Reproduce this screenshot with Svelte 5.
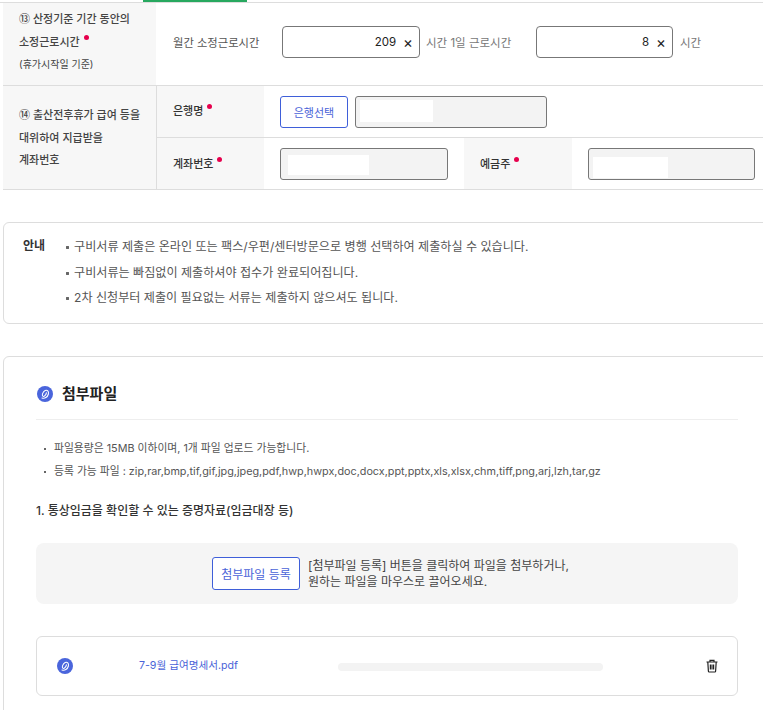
<script>
  const bullets = [
    '구비서류 제출은 온라인 또는 팩스/우편/센터방문으로 병행 선택하여 제출하실 수 있습니다.',
    '구비서류는 빠짐없이 제출하셔야 접수가 완료되어집니다.',
    '2차 신청부터 제출이 필요없는 서류는 제출하지 않으셔도 됩니다.'
  ];
  const fileNotes = [
    '파일용량은 15MB 이하이며, 1개 파일 업로드 가능합니다.',
    '등록 가능 파일 : zip,rar,bmp,tif,gif,jpg,jpeg,pdf,hwp,hwpx,doc,docx,ppt,pptx,xls,xlsx,chm,tiff,png,arj,lzh,tar,gz'
  ];
</script>

{#snippet clip(size)}
  <svg class="clip" width={size} height={size} viewBox="0 0 16 16">
    <circle cx="8" cy="8" r="8" fill="#4a65dc" />
    <path d="M5 12c2.6 1 5.6-.8 6.4-4C12 5.2 10.2 3.6 8.2 4.6 6 5.7 4.5 9 5.8 10.2c1.2 1 3.2-1.2 3.6-3.4" fill="none" stroke="#fff" stroke-width="1.1" stroke-linecap="round" />
  </svg>
{/snippet}

<div class="page">
  <div class="tabline"><div class="tabbar"></div></div>

  <div class="table">
    <div class="row first">
      <div class="th">
        <p>⑬ 산정기준 기간 동안의</p>
        <p>소정근로시간 <i class="req"></i></p>
        <p class="sub">(휴가시작일 기준)</p>
      </div>
      <div class="hours">
        <span class="plain">월간 소정근로시간</span>
        <div class="num wide"><span>209</span><b>×</b></div>
        <span class="unit">시간 1일 근로시간</span>
        <div class="num"><span>8</span><b>×</b></div>
        <span class="unit last">시간</span>
      </div>
    </div>

    <div class="row">
      <div class="th second">
        <p>⑭ 출산전후휴가 급여 등을</p>
        <p>대위하여 지급받을</p>
        <p>계좌번호</p>
      </div>
      <div class="rows">
        <div class="subrow">
          <div class="label">은행명 <i class="req"></i></div>
          <div class="field">
            <button class="btn bank">은행선택</button>
            <div class="ro bankname"><span class="mask"></span></div>
          </div>
        </div>
        <div class="subrow">
          <div class="label">계좌번호 <i class="req"></i></div>
          <div class="field">
            <div class="ro account"><span class="mask"></span></div>
          </div>
          <div class="label owner">예금주 <i class="req"></i></div>
          <div class="field">
            <div class="ro holder"><span class="mask"></span></div>
          </div>
        </div>
      </div>
    </div>
  </div>

  <div class="notice">
    <strong>안내</strong>
    <ul>
      {#each bullets as b}
        <li>{b}</li>
      {/each}
    </ul>
  </div>

  <div class="card">
    <h2>{@render clip(16)} 첨부파일</h2>
    <ul class="notes">
      {#each fileNotes as n}
        <li>{n}</li>
      {/each}
    </ul>
    <h3>1. 통상임금을 확인할 수 있는 증명자료(임금대장 등)</h3>
    <div class="drop">
      <button class="btn add">첨부파일 등록</button>
      <p>[첨부파일 등록] 버튼을 클릭하여 파일을 첨부하거나,<br />원하는 파일을 마우스로 끌어오세요.</p>
    </div>
    <div class="file">
      {@render clip(16)}
      <span class="fname">7-9월 급여명세서.pdf</span>
      <div class="progress"></div>
      <svg class="trash" width="14" height="14" viewBox="0 0 14 14" fill="none" stroke="#222" stroke-width="1.2">
        <path d="M1.5 3h11M5 3V1.4h4V3M2.8 3l.6 9.2c0 .5.4.8.8.8h5.6c.4 0 .8-.3.8-.8l.6-9.2" />
        <path d="M5.4 5.5v5M7 5.5v5M8.6 5.5v5" />
      </svg>
    </div>
  </div>
</div>

<style>
  :global(body) {
    margin: 0;
    background: #fff;
    overflow: hidden;
  }

  .page {
    width: 771px;
    height: 710px;
    overflow: hidden;
    font-family: Inter, "Noto Sans CJK KR", sans-serif;
    font-size: 12px;
    color: #333;
  }

  p {
    margin: 0;
  }

  .tabline {
    height: 2px;
    border-bottom: 1px solid #ddd;
    padding-left: 143px;
  }

  .tabbar {
    width: 104px;
    height: 2px;
    background: #27a85f;
  }

  .table {
    margin-left: 3px;
  }

  .row {
    display: flex;
    border-bottom: 1px solid #ddd;
  }

  .row.first {
    height: 82px;
  }

  .th {
    width: 153px;
    flex: none;
    box-sizing: border-box;
    padding: 5px 0 0 16px;
    background: #f7f7f7;
    font-size: 11px;
    line-height: 22.5px;
    font-weight: 500;
    color: #444;
  }

  .th .sub {
    font-size: 10px;
    font-weight: 400;
  }

  .th.second {
    width: 154px;
    padding-top: 18px;
    border-right: 1px solid #ddd;
  }

  .req {
    display: inline-block;
    width: 5px;
    height: 5px;
    border-radius: 50%;
    background: #e6004d;
    vertical-align: 6px;
    margin-left: 1px;
  }

  .hours {
    display: flex;
    align-items: center;
    padding: 0 0 4px 17px;
    font-size: 11.5px;
  }

  .plain {
    width: 109px;
    font-size: 11.3px;
    color: #555;
  }

  .num {
    width: 137px;
    height: 32px;
    box-sizing: border-box;
    border: 1px solid #777;
    border-radius: 4px;
    display: flex;
    align-items: center;
    justify-content: flex-end;
    gap: 7px;
    padding-right: 6px;
    color: #222;
    font-size: 11.5px;
  }

  .num.wide {
    width: 138px;
  }

  .num b {
    font-weight: 400;
    font-size: 15px;
    line-height: 1;
  }

  .unit {
    width: 116px;
    box-sizing: border-box;
    padding-left: 6px;
    color: #777;
  }

  .unit.last {
    padding-left: 7px;
  }

  .rows {
    flex: 1;
  }

  .subrow {
    display: flex;
    height: 51px;
  }

  .subrow:first-child {
    height: 51px;
    border-bottom: 1px solid #ddd;
  }

  .label {
    width: 107px;
    box-sizing: border-box;
    flex: none;
    padding: 16px 0 0 16px;
    background: #f7f7f7;
    font-size: 11px;
    font-weight: 500;
    color: #333;
  }

  .subrow + .subrow .label {
    padding-top: 17px;
  }

  .label.owner {
    width: 108px;
  }

  .field {
    display: flex;
    align-items: center;
    gap: 7px;
    padding: 0 16px;
  }

  .btn {
    box-sizing: border-box;
    background: #fff;
    border: 1px solid #3f5fd9;
    border-radius: 3px;
    color: #4a63d8;
    font: inherit;
    padding: 0;
  }

  .btn.bank {
    width: 68px;
    height: 32px;
    font-size: 11px;
  }

  .ro {
    height: 32px;
    box-sizing: border-box;
    border: 1px solid #777;
    border-radius: 3px;
    background: #f3f3f3;
    display: flex;
    padding: 3px 0 0 4px;
  }

  .mask {
    background: #fff;
    height: 22px;
  }

  .bankname {
    width: 192px;
  }

  .bankname .mask {
    width: 73px;
  }

  .account {
    width: 168px;
    padding: 6px 0 0 7px;
  }

  .account .mask {
    width: 81px;
    height: 20px;
  }

  .holder {
    width: 167px;
    padding-top: 8px;
  }

  .holder .mask {
    width: 75px;
    height: 21px;
  }

  .notice {
    margin: 32px 0 0 3px;
    height: 102px;
    box-sizing: border-box;
    border: 1px solid #ddd;
    border-radius: 6px;
    display: flex;
    padding: 11px 0 0 19px;
  }

  .notice strong {
    width: 41px;
    flex: none;
    line-height: 23px;
    font-weight: 700;
    color: #333;
  }

  .notice ul {
    margin: 0;
    padding: 0;
    list-style: none;
  }

  .notice li {
    line-height: 25.5px;
    font-size: 12.1px;
    color: #555;
    padding-left: 10px;
    display: block;
    background: radial-gradient(circle at 1.5px 1.5px, #666 1.4px, transparent 1.6px) no-repeat 2px 12px;
  }

  .card {
    margin: 32px 0 0 3px;
    height: 400px;
    box-sizing: border-box;
    border: 1px solid #ddd;
    border-radius: 6px;
    padding: 0 32px;
  }

  h2 {
    margin: 0;
    height: 63px;
    box-sizing: border-box;
    padding-top: 25px;
    display: flex;
    align-items: flex-start;
    gap: 9px;
    font-size: 15px;
    line-height: 24px;
    font-weight: 700;
    color: #222;
    border-bottom: 1px solid #eee;
  }

  h2 .clip {
    margin: 4px 0 0 1px;
  }

  .notes {
    margin: 0;
    padding: 17px 0 0 8px;
    list-style: none;
  }

  .notes li {
    font-size: 10.8px;
    line-height: 23px;
    color: #555;
    padding-left: 10px;
    background: linear-gradient(#666, #666) no-repeat 0 11px / 2px 2px;
  }

  h3 {
    margin: 18px 0 0;
    font-size: 12px;
    line-height: 20px;
    font-weight: 500;
    color: #333;
  }

  .drop {
    margin-top: 22px;
    height: 61px;
    background: #f5f5f5;
    border-radius: 8px;
    display: flex;
    align-items: center;
    justify-content: center;
    gap: 8px;
    padding-left: 8px;
  }

  .drop p {
    line-height: 15.5px;
    color: #444;
    width: 262px;
    white-space: nowrap;
  }

  .btn.add {
    width: 88px;
    height: 33px;
    flex: none;
  }

  .file {
    margin-top: 32px;
    height: 60px;
    box-sizing: border-box;
    border: 1px solid #ddd;
    border-radius: 6px;
    display: flex;
    align-items: center;
    padding: 0 0 1px 20px;
  }

  .fname {
    width: 199px;
    margin: 0 0 2px 66px;
    color: #4a63d8;
    font-size: 10.6px;
  }

  .progress {
    width: 265px;
    height: 8px;
    margin-top: 2px;
    border-radius: 4px;
    background: #f3f3f3;
  }

  .trash {
    margin-left: 102px;
  }
</style>
